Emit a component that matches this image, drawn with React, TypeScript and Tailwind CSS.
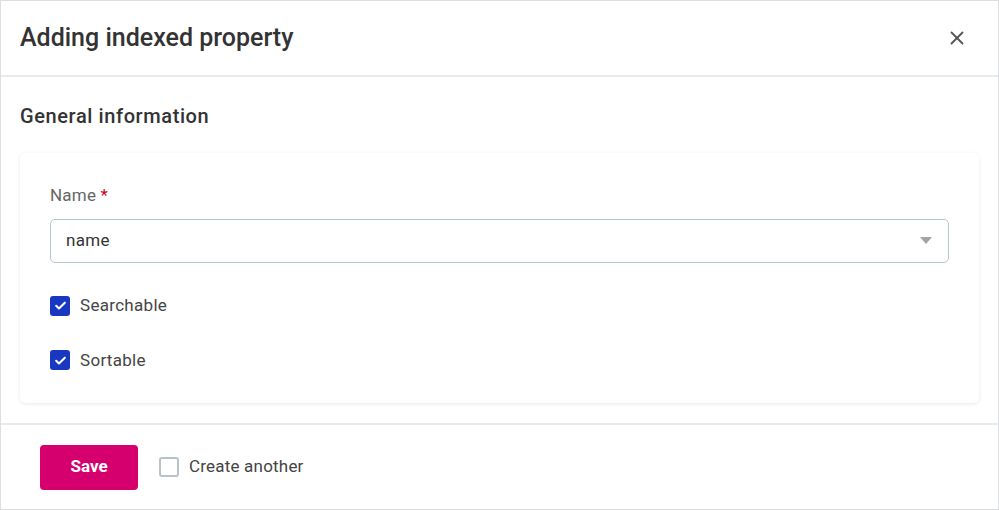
import { X } from "lucide-react";

function Check({ checked }: { checked: boolean }) {
  if (!checked) {
    return <span className="w-[20px] h-[20px] rounded-[3px] border-2 border-[#b7c3ca] bg-white shrink-0" />;
  }
  return (
    <span className="w-[20px] h-[20px] rounded-[3px] bg-[#1838c2] flex items-center justify-center shrink-0">
      <svg width="13" height="13" viewBox="0 0 12 12" fill="none">
        <path d="M2 6.2l2.6 2.5L10 3.4" stroke="white" strokeWidth="1.9" strokeLinecap="round" strokeLinejoin="round" />
      </svg>
    </span>
  );
}

export default function App() {
  return (
    <div className="w-[999px] h-[510px] bg-white border border-[#dcdfe2] flex flex-col font-['Roboto',sans-serif]">
      <div className="h-[76px] shrink-0 flex items-center justify-between pl-[19px] pr-[30px] border-b-2 border-[#e8ebed]">
        <h1 className="text-[25px] font-medium text-[#333]">Adding indexed property</h1>
        <X className="w-[22px] h-[22px] text-[#555]" strokeWidth={2} />
      </div>
      <div className="flex-1 px-[19px] pt-[26px] bg-white">
        <h2 className="text-[20px] font-medium text-[#333] leading-[26px] tracking-[0.6px]">General information</h2>
        <div className="mt-[24px] bg-white rounded-[6px] shadow-[0_1px_4px_rgba(0,0,0,0.09)] px-[30px] pt-[30px] pb-[30px]">
          <label className="block text-[17px] text-[#666] leading-[24px] tracking-[0.2px]">
            Name <span className="text-[#d0021b]">*</span>
          </label>
          <div className="mt-[12px] h-[44px] rounded-[5px] border border-[#b4c8d0] flex items-center justify-between pl-[15px] pr-[16px]">
            <span className="text-[17px] text-[#333] tracking-[0.3px]">name</span>
            <svg width="12" height="8" viewBox="0 0 12 8">
              <path d="M0 0h12L6 7z" fill="#a3a3a3" />
            </svg>
          </div>
          <div className="mt-[30px] flex items-center gap-[10px]">
            <Check checked />
            <span className="text-[17px] text-[#444] tracking-[0.3px]">Searchable</span>
          </div>
          <div className="mt-[29px] flex items-center gap-[10px]">
            <Check checked />
            <span className="text-[17px] text-[#444] tracking-[0.3px]">Sortable</span>
          </div>
        </div>
      </div>
      <div className="h-[86px] shrink-0 border-t-2 border-[#e8ebed] flex items-center pl-[39px] gap-[21px]">
        <button className="w-[98px] h-[45px] rounded-[4px] bg-[#d5006d] text-white font-bold text-[17px]">Save</button>
        <div className="flex items-center gap-[10px]">
          <Check checked={false} />
          <span className="text-[17px] text-[#444] tracking-[0.2px]">Create another</span>
        </div>
      </div>
    </div>
  );
}
